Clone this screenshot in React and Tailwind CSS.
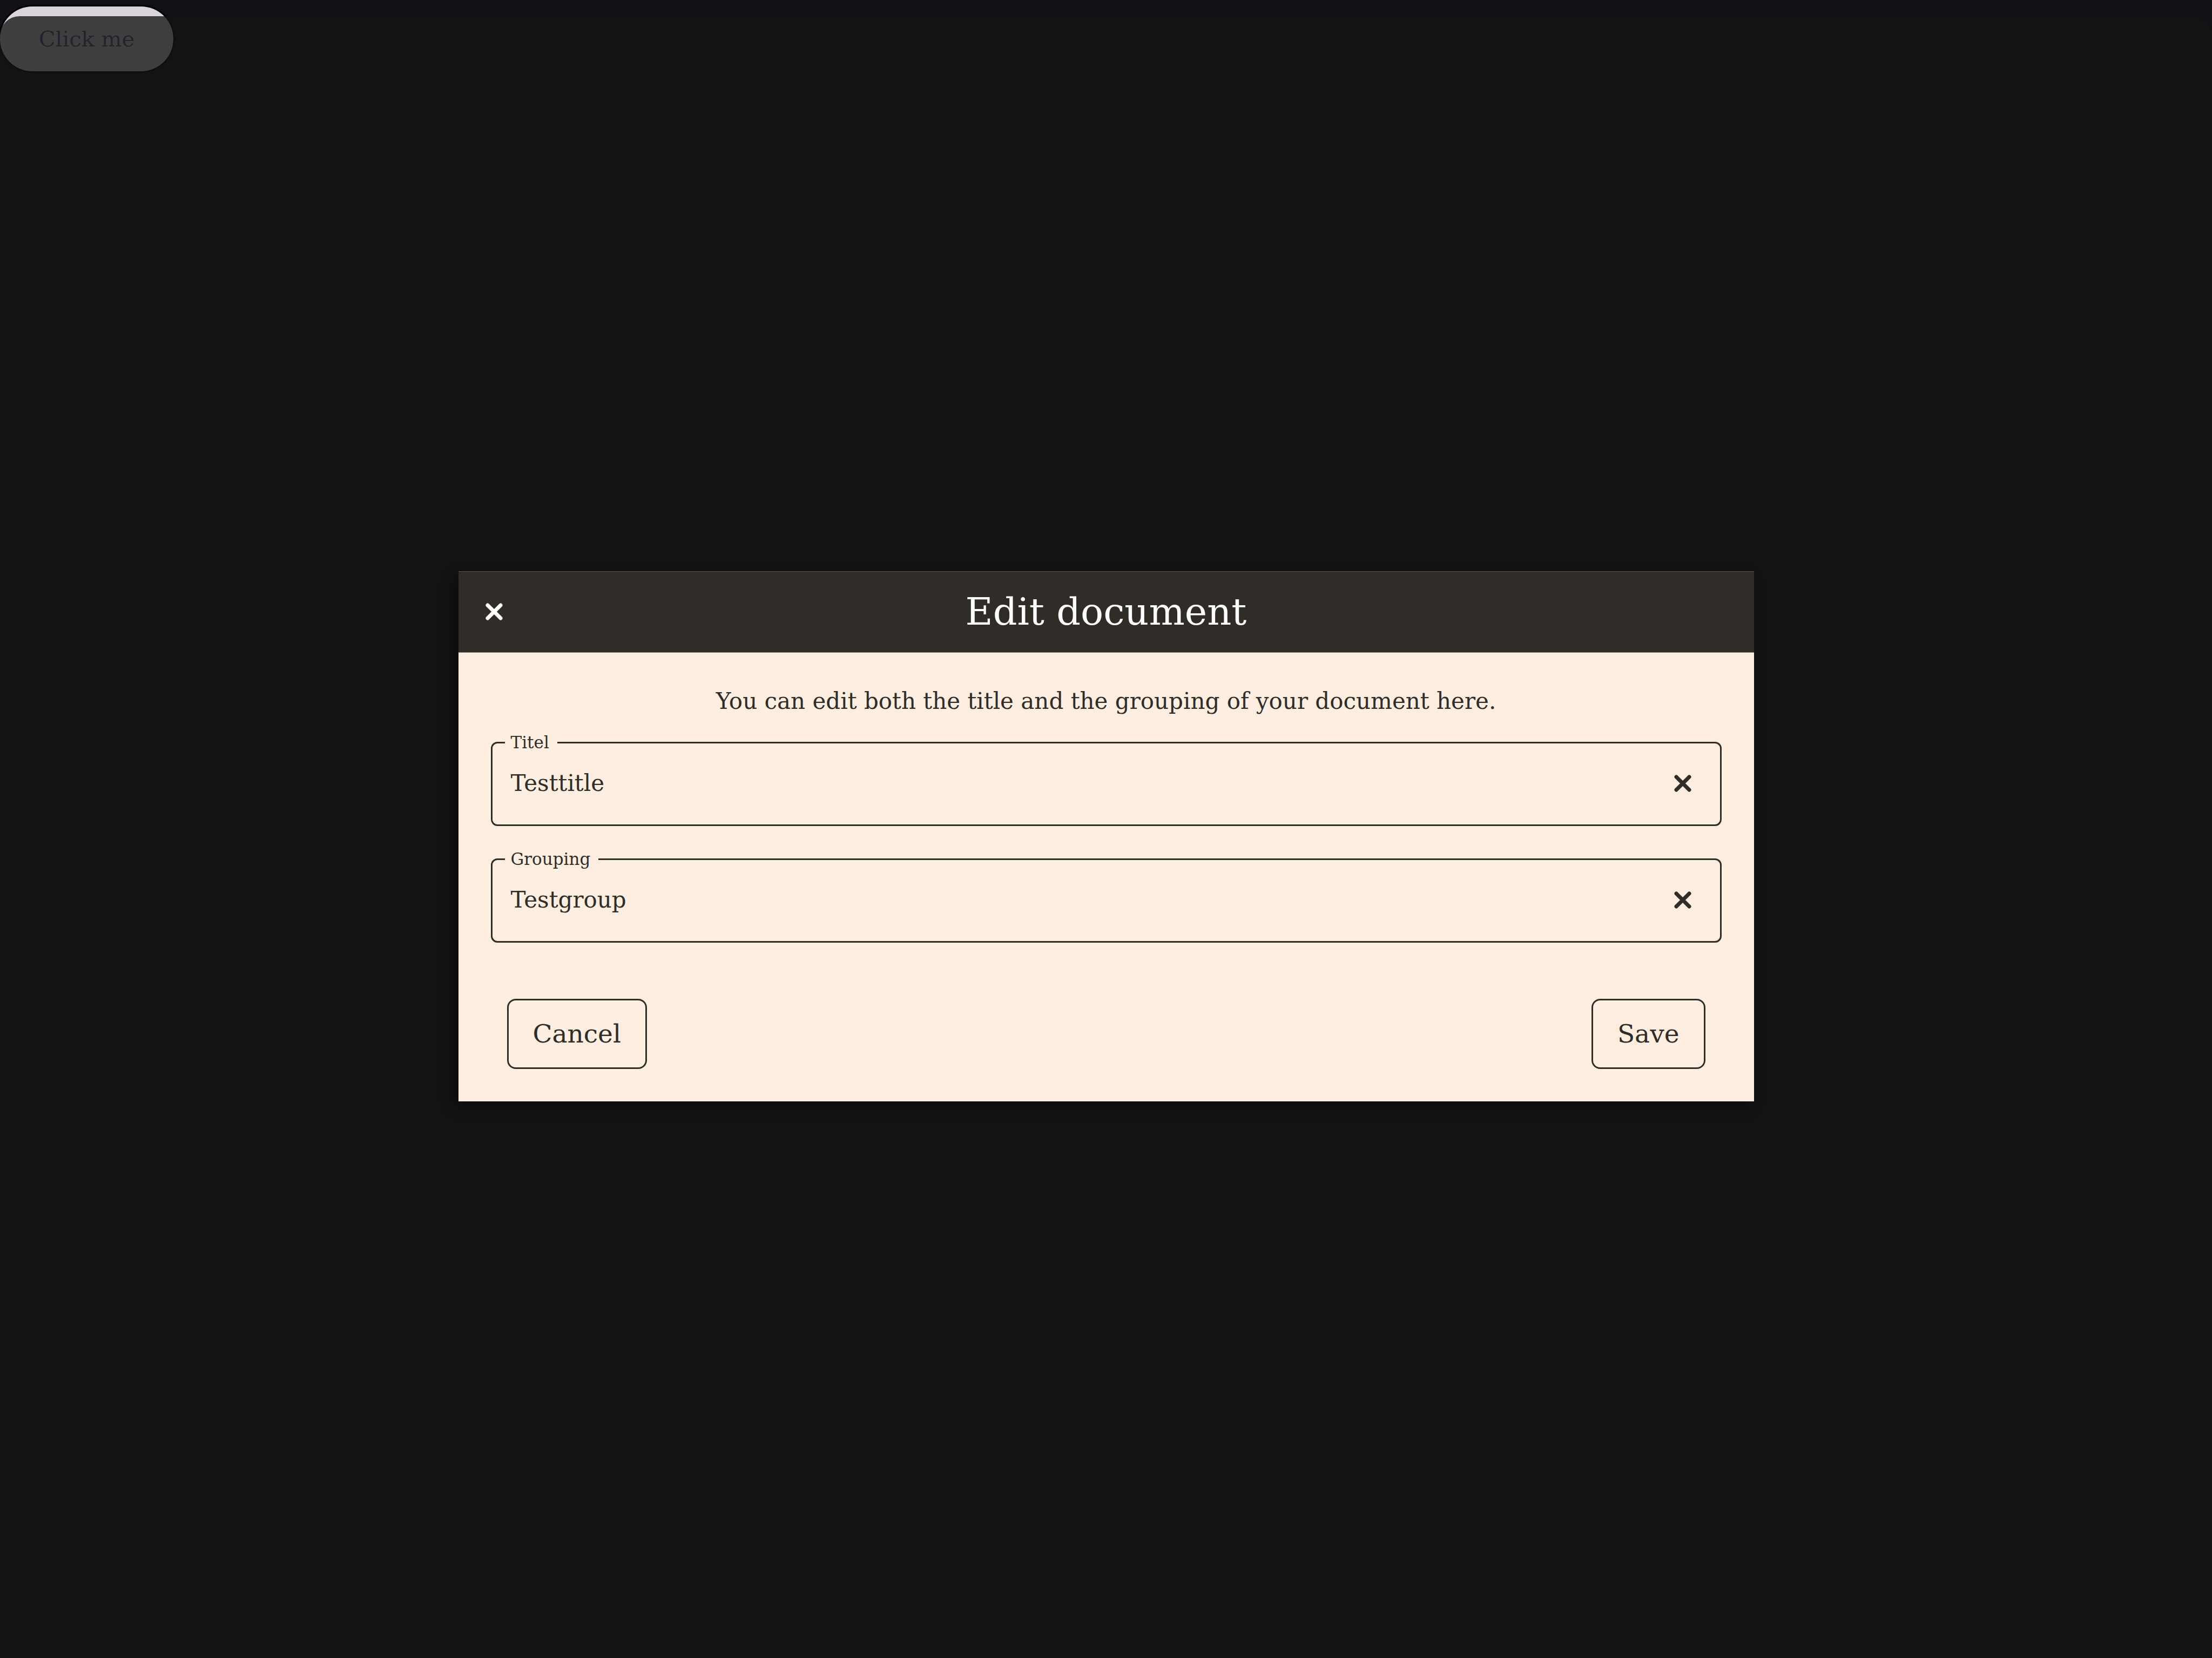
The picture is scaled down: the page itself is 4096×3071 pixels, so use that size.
import React from "react";

function Cross({ className }) {
  return (
    <svg viewBox="0 0 32 32" fill="none" stroke="currentColor" strokeWidth="7" strokeLinecap="round" aria-hidden="true" className={className}>
      <path d="M4 4 28 28M28 4 4 28" />
    </svg>
  );
}

function Field({ id, label, value }) {
  return (
    <fieldset className="min-w-0 rounded-[12px] border-3 border-[#302d28] pr-[53px] pl-[23px]">
      <legend className="h-[19px] pr-[15px] pl-[11px] text-[31px] leading-[19px]">
        <label htmlFor={id}>{label}</label>
      </legend>
      <div className="flex h-[142px] items-center pb-[10px]">
        <input id={id} type="text" defaultValue={value} className="min-w-0 flex-1 bg-transparent pl-[11px] text-[42px] leading-[60px] outline-none" />
        <button type="button" aria-label={"Clear " + label} className="shrink-0">
          <Cross className="size-[32px]" />
        </button>
      </div>
    </fieldset>
  );
}

function ActionButton({ children }) {
  return (
    <button type="button" className="h-[130px] rounded-[16px] border-3 border-[#302d28] px-[45px] text-[47px] leading-[60px]">
      {children}
    </button>
  );
}

export default function App() {
  return (
    <div className="relative min-h-screen bg-[#120f17] pt-[12px] font-['DejaVu_Serif',serif] text-[#302d28]">
      <button type="button" className="h-[120px] rounded-full bg-[#dad5dd] px-[72px] text-[40px] text-[#65558f] shadow-[0_0_0_3px_#000]">
        Click me
      </button>
      <div className="absolute inset-x-0 top-[30px] bottom-0 flex items-center justify-center rounded-t-[36px] bg-[#131412]/78 pb-[4px]">
        <section role="dialog" aria-labelledby="dialog-title" className="w-[2399px] max-w-full bg-[#fdeee1] shadow-[-8px_10px_24px_rgba(0,0,0,0.4)]">
          <header className="flex h-[151px] items-center border-y border-t-[#5a544c] border-b-[#8f877d] bg-[#302d28] px-[50px] text-white">
            <button type="button" aria-label="Close">
              <Cross className="size-[32px]" />
            </button>
            <h2 id="dialog-title" className="flex-1 pr-[32px] text-center text-[70px] leading-[90px]">Edit document</h2>
          </header>
          <form className="flex flex-col p-[60px]">
            <p className="text-center text-[42px] leading-[60px]">
              You can edit both the title and the grouping of your document here.
            </p>
            <div className="mt-[37px] flex flex-col gap-[52px]">
              <Field id="title" label="Titel" value="Testtitle" />
              <Field id="grouping" label="Grouping" value="Testgroup" />
            </div>
            <div className="mt-[104px] flex justify-between px-[30px]">
              <ActionButton>Cancel</ActionButton>
              <ActionButton>Save</ActionButton>
            </div>
          </form>
        </section>
      </div>
    </div>
  );
}
